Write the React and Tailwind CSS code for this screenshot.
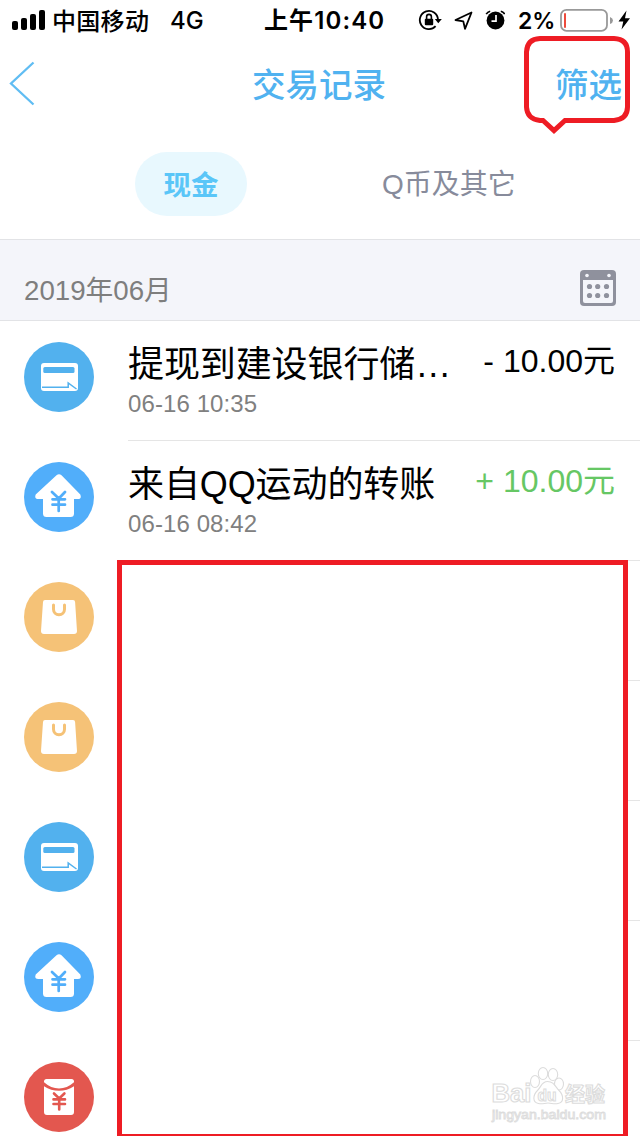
import React from "react";

const sans = "font-['Liberation_Sans','Noto_Sans_CJK_SC',sans-serif]";
const cjk = "font-['Noto_Sans_CJK_SC',sans-serif]";
const inter = "font-['Inter','Noto_Sans_CJK_SC',sans-serif]";

function StatusBar() {
  return (
    <div className={`flex h-10 shrink-0 items-center whitespace-nowrap text-black ${inter}`}>
      <svg className="ml-3 h-5 w-[34px] shrink-0" viewBox="0 0 34 20">
        <rect x="0" y="11" width="6" height="9" rx="2" />
        <rect x="9" y="8" width="6" height="12" rx="2" />
        <rect x="18" y="4" width="6" height="16" rx="2" />
        <rect x="27" y="0" width="6" height="20" rx="2" />
      </svg>
      <span className={`ml-[6px] w-[118px] shrink-0 text-[24px] font-medium leading-10 tracking-[0.3px] ${cjk}`}>中国移动</span>
      <span className="w-[94px] shrink-0 pt-px text-[24px] font-medium leading-10">4G</span>
      <span className="w-[154px] shrink-0 pt-px text-[24px] font-semibold leading-10 tracking-[1.1px]">上午10:40</span>
      <svg className="h-6 w-6 shrink-0" viewBox="0 0 24 24" fill="none" stroke="black" strokeWidth="1.8">
        <path d="M17.600 18.200A9.100 9.100 0 1 1 20 11.500" />
        <path d="M16.800 11h7l-3.500 4.300z" fill="black" stroke="none" />
        <rect x="6.800" y="10.800" width="8.400" height="6.400" rx="1" fill="black" stroke="none" />
        <path d="M8.600 11V8.800a2.400 2.400 0 0 1 4.800 0V11" strokeWidth="1.600" />
      </svg>
      <svg className="ml-3 h-6 w-5 shrink-0" viewBox="0 0 20 24" fill="none" stroke="black" strokeWidth="1.8" strokeLinejoin="round">
        <path d="M17.500 4.500 1.500 12l7.800 1.400 1.700 7.400z" />
      </svg>
      <svg className="ml-[11px] h-6 w-5 shrink-0" viewBox="0 0 20 24">
        <circle cx="10.500" cy="12.500" r="8.900" />
        <path d="M1.200 6.200Q2.500 3.800 5.200 3.200M15.800 3.200Q18.500 3.800 19.700 6.200" fill="none" stroke="black" strokeWidth="1.600" />
        <path d="M11 7v6.200H6.500" fill="none" stroke="white" strokeWidth="1.700" />
      </svg>
      <span className="ml-[13px] w-[42px] shrink-0 pt-px text-[23px] font-semibold leading-10">2%</span>
      <svg className="h-6 w-[72px] shrink-0" viewBox="0 0 72 24">
        <rect x="1" y="1.800" width="46" height="21" rx="5.500" fill="white" stroke="#999" strokeWidth="1.800" />
        <rect x="4" y="5" width="2" height="15" rx="1" fill="#ed4b3c" />
        <path d="M50 9v7q3-1.200 3-3.500T50 9" fill="#999" />
        <path d="M66.500 2.500 58.500 13.500h4.800L61.500 21.500l8.500-11.300h-5z" fill="black" />
      </svg>
    </div>
  );
}

function CardIcon() {
  return (
    <svg className="size-[70px] shrink-0" viewBox="0 0 70 70">
      <circle cx="35" cy="35" r="35" fill="#52b1ee" />
      <rect x="17" y="21" width="37" height="28" rx="3" fill="white" />
      <rect x="19.300" y="25" width="31.200" height="6" rx="1.500" fill="#52b1ee" />
      <path d="M18 45.300h26.200v-4.300l8.300 6" fill="none" stroke="#52b1ee" strokeWidth="1.500" />
    </svg>
  );
}

function HouseIcon() {
  return (
    <svg className="size-[70px] shrink-0" viewBox="0 0 70 70">
      <circle cx="35" cy="35" r="35" fill="#51aefa" />
      <path d="M32.500 13.300q2.500-2.300 5 0L56.300 32.500q1.700 4.500-2.500 4.500H50v14.500q0 3.500-3.500 3.500h-24Q19 55 19 51.500V37h-4.500q-4.500 0-2.800-4.500z" fill="white" />
      <path d="m28 30 6.800 6.500 6.200-6.500M28.500 37.300h12.500M28.500 42.700h12.500M34.700 36.500v12.500" fill="none" stroke="#51aefa" strokeWidth="2.700" strokeLinecap="round" />
    </svg>
  );
}

function BagIcon() {
  return (
    <svg className="size-[70px] shrink-0" viewBox="0 0 70 70">
      <circle cx="35" cy="35" r="35" fill="#f5c277" />
      <path d="M21 18h28q2 0 2.100 2L53 49q0 3-3 3H20q-3 0-3-3l2-29q.1-2 2-2z" fill="white" />
      <path d="M29.500 23v4.300a5.500 5.500 0 0 0 11 0V23" fill="none" stroke="#f5c277" strokeWidth="3" strokeLinecap="round" />
    </svg>
  );
}

function PacketIcon() {
  return (
    <svg className="size-[70px] shrink-0" viewBox="0 0 70 70">
      <circle cx="35" cy="35" r="35" fill="#e3574f" />
      <path d="M20 19.500Q20 17 22.500 17h25q2.500 0 2.500 2.500v.8Q43 26.500 35 26.500T20 20.300z" fill="white" />
      <path d="M20 24.300q7 4.500 15 4.500t15-4.500V50q0 3-3 3H23q-3 0-3-3z" fill="white" />
      <path d="m30 31.500 5.200 5 5.200-5M29.500 37.400h11.500M29.500 42h11.500M35.200 36.500v11" fill="none" stroke="#e3574f" strokeWidth="2.600" strokeLinecap="round" />
    </svg>
  );
}

const rows = [
  { Icon: CardIcon, title: "提现到建设银行储…", date: "06-16 10:35", amount: "- 10.00元", tone: "text-black" },
  { Icon: HouseIcon, title: "来自QQ运动的转账", date: "06-16 08:42", amount: "+ 10.00元", tone: "text-[#66c764]" },
  { Icon: BagIcon },
  { Icon: BagIcon },
  { Icon: CardIcon },
  { Icon: HouseIcon },
  { Icon: PacketIcon },
];

function Row({ Icon, title, date, amount, tone }) {
  return (
    <div className="flex h-[120px] shrink-0 pl-6">
      <div className="mr-[34px] pt-[21px]">
        <Icon />
      </div>
      <div className="flex flex-1 justify-between whitespace-nowrap border-b border-[#e5e5e5] pr-[25px]">
        {title && (
          <div className="flex flex-col pt-[19px]">
            <span className={`h-[49px] text-[36px] leading-[50px] tracking-[-0.1px] text-black ${sans}`}>{title}</span>
            <span className={`text-[24px] leading-[30px] tracking-[0.1px] text-[#808080] ${sans}`}>{date}</span>
          </div>
        )}
        {amount && <span className={`pt-[20px] text-[32px] leading-10 ${sans} ${tone}`}>{amount}</span>}
      </div>
    </div>
  );
}

function Watermark() {
  return (
    <svg className="h-[64px] w-[122px]" viewBox="0 0 122 64" fill="white" stroke="#dcdcdc" strokeWidth="1.100">
      <g fontFamily="Liberation Sans" fontWeight="bold">
        <text x="2.500" y="36" fontSize="25" textLength="40" lengthAdjust="spacingAndGlyphs">Bai</text>
        <ellipse cx="46" cy="15.500" rx="4.500" ry="6" />
        <ellipse cx="54" cy="7.500" rx="4.700" ry="6" />
        <ellipse cx="64" cy="8.500" rx="4.700" ry="6" />
        <ellipse cx="70" cy="18" rx="4.500" ry="6" />
        <path d="M58.500 15.500c-6 0-6 5-10 9-5 5-5 12 1 13 4 1 6-.5 9.500-.5s6 1.500 10 .5c6-1 6-8 1-13-4-4-5-9-11.500-9z" />
        <text x="48.500" y="35" fontSize="17" textLength="19" lengthAdjust="spacingAndGlyphs">du</text>
      </g>
      <text x="76" y="35.500" fontSize="20" fontWeight="bold" fontFamily="Noto Sans CJK SC">经验</text>
      <text x="3" y="52.500" fontSize="12" fontFamily="Liberation Sans" textLength="114" lengthAdjust="spacingAndGlyphs" strokeWidth=".8">jingyan.baidu.com</text>
    </svg>
  );
}

export default function App() {
  return (
    <div className="relative flex h-[1136px] w-[640px] flex-col overflow-hidden bg-white">
      <StatusBar />
      <header className={`flex h-[88px] shrink-0 items-center text-[#50b2f0] ${cjk}`}>
        <svg className="ml-[9px] h-[46px] w-[27px]" viewBox="0 0 27 46" fill="none" stroke="#60bdf3" strokeWidth="2.300">
          <path d="M24.500 1.500 2 22.500l22.500 21" />
        </svg>
        <h1 className="ml-[216px] w-[303px] pb-[2px] text-[33.500px] font-medium leading-[50px]">交易记录</h1>
        <span className="pb-[2px] text-[33.500px] font-medium leading-[50px]">筛选</span>
      </header>
      <nav className={`flex h-[112px] shrink-0 items-start border-b border-[#e2e3e6] pt-6 ${cjk}`}>
        <span className="ml-[135px] flex h-16 w-28 items-center justify-center rounded-full bg-[#e8f8fe] pb-px text-[27.500px] font-bold text-[#5ac6f8]">现金</span>
        <span className={`ml-[135px] pt-px text-[28px] leading-[64px] text-[#878b9b] ${sans}`}>Q币及其它</span>
      </nav>
      <div className="flex h-[81px] shrink-0 items-start justify-between border-b border-[#e2e3e6] bg-[#f4f5fa] pl-6 pr-6">
        <span className={`pt-[31px] text-[27.700px] leading-10 text-[#7e7e7e] ${sans}`}>2019年06月</span>
        <svg className="mt-[30px] h-9 w-9" viewBox="0 0 36 36" fill="#8f919d">
          <rect width="36" height="36" rx="4" />
          <path d="M3 10h30v21q0 2-2 2H5q-2 0-2-2z" fill="#f4f5fa" />
          <circle cx="7" cy="5.500" r="1.800" fill="#f4f5fa" />
          <circle cx="29" cy="5.500" r="1.800" fill="#f4f5fa" />
          {[9.5, 17.7, 26.5].map((x) => (
            <g key={x}>
              <circle cx={x} cy="16.500" r="2.600" />
              <circle cx={x} cy="25.500" r="2.600" />
            </g>
          ))}
        </svg>
      </div>
      <main className="flex flex-col">
        {rows.map((row, i) => (
          <Row key={i} {...row} />
        ))}
      </main>

      <svg className="absolute left-[520px] top-[32px] h-[104px] w-[114px]" viewBox="0 0 114 104" fill="none" stroke="#ee1c24" strokeWidth="5">
        <path d="M20 6.500H94Q107.500 7 107.500 20V75Q107.500 87 94 88.500H45L34 98.500 23 88.500H20Q7 87 6.500 75V20Q7 7 20 6.500z" />
      </svg>
      <div className="absolute left-[117px] top-[560px] flex h-[579px] w-[511px] items-end justify-end border-[5px] border-[#ee1c24] bg-white pb-[4px] pr-[12px]">
        <Watermark />
      </div>
    </div>
  );
}
